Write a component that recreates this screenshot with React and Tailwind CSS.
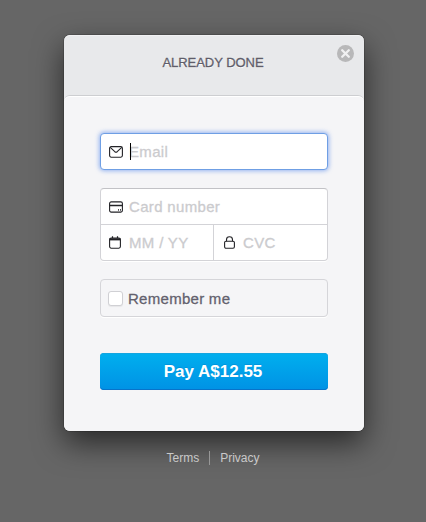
function MailIcon() {
  return (
    <svg width="14" height="12" viewBox="0 0 14 12" fill="none" stroke="#222226">
      <rect x="0.6" y="0.6" width="12.8" height="10.6" rx="1.6" strokeWidth="1.1" />
      <path d="M1.2 1.4 L5.8 5.7 Q7 6.6 8.2 5.7 L12.8 1.4" strokeWidth="1.1" />
    </svg>
  );
}

function CardIcon() {
  return (
    <svg width="14" height="12" viewBox="0 0 14 12" fill="none" stroke="#222226">
      <rect x="0.6" y="0.9" width="12.8" height="10.2" rx="1.6" strokeWidth="1.1" />
      <path d="M0.5 4.5 H13.5" strokeWidth="1.5" />
      <path d="M9.5 8 V9.8 M11.5 8 V9.8" strokeWidth="0.8" />
    </svg>
  );
}

function CalendarIcon() {
  return (
    <svg width="12" height="13" viewBox="0 0 12 13" fill="none" stroke="#222226">
      <rect x="0.6" y="2" width="10.8" height="10.2" rx="1.6" strokeWidth="1.1" />
      <path d="M0.6 3.3 H11.4" strokeWidth="2.2" />
      <path d="M3.5 0.3 V2 M8.5 0.3 V2" strokeWidth="1.2" />
    </svg>
  );
}

function LockIcon() {
  return (
    <svg width="11" height="13" viewBox="0 0 11 13" fill="none" stroke="#222226">
      <rect x="0.6" y="5.2" width="9.8" height="7" rx="1.4" strokeWidth="1.1" />
      <path d="M2.5 5.2 V3.7 Q2.5 0.8 5.5 0.8 Q8.5 0.8 8.5 3.7 V5.2" strokeWidth="1.1" />
    </svg>
  );
}

function Placeholder({ children }) {
  return (
    <span className="text-[15px] leading-5 tracking-[0.33px] text-[#cbcbce] [-webkit-text-stroke:0.3px_#cbcbce]">
      {children}
    </span>
  );
}

export default function App() {
  return (
    <div className="flex h-[522px] w-[426px] flex-col items-center overflow-hidden bg-[#666666] pt-[35px] font-['Liberation_Sans',Arial,sans-serif]">
      <main className="ml-[2px] h-[396px] w-[300px] shrink-0 rounded-[6px] bg-[#e8e9eb] shadow-[0_0_0_1px_rgba(0,0,0,0.15),0_12px_30px_rgba(0,0,0,0.6)]">
        <header className="relative flex h-[60px] justify-center rounded-t-[6px] pt-[18px] pr-[2px] shadow-[inset_0_1px_0_#f1f1f3]">
          <h1 className="text-[13px] leading-5 tracking-[-0.05px] text-[#5f5d6a] [-webkit-text-stroke:0.3px_#5f5d6a] [text-shadow:0_1px_0_#fff]">
            ALREADY DONE
          </h1>
          <button aria-label="Close" className="absolute top-[10px] right-[10px]">
            <svg width="17" height="17" viewBox="0 0 17 17">
              <circle cx="8.5" cy="8.5" r="8.5" fill="#b8b8b9" />
              <path d="M5.2 5.2 L11.8 11.8 M11.8 5.2 L5.2 11.8" stroke="#f1f1f2" strokeWidth="2.3" strokeLinecap="round" />
            </svg>
          </button>
        </header>
        <section className="h-[336px] rounded-[6px] border-t border-[#cdced1] bg-[#f5f5f7] px-[36px] pt-[37px] shadow-[inset_0_1px_0_#ffffff]">
          <div className="flex h-[37px] items-center rounded-[4px] border border-[#6f9fe4] bg-white pl-[8px] shadow-[0_0_4px_1px_rgba(70,125,235,0.55)]">
            <MailIcon />
            <span className="relative z-10 ml-[7px] h-[17px] w-px bg-black" />
            <span className="-ml-[2px] flex"><Placeholder>Email</Placeholder></span>
          </div>

          <div className="mt-[18px] h-[73px] rounded-[4px] border border-[#d3d3d7] border-t-[#c2c2c6] bg-white shadow-[0_1px_0_#fff]">
            <div className="flex h-[36px] items-center gap-[6px] border-b border-[#d3d3d7] pl-[8px]">
              <CardIcon />
              <Placeholder>Card number</Placeholder>
            </div>
            <div className="flex h-[35px]">
              <div className="flex w-[113px] items-center gap-[8px] border-r border-[#d3d3d7] pl-[8px]">
                <CalendarIcon />
                <Placeholder>MM / YY</Placeholder>
              </div>
              <div className="flex items-center gap-[8px] pl-[10px]">
                <LockIcon />
                <Placeholder>CVC</Placeholder>
              </div>
            </div>
          </div>

          <label className="mt-[18px] flex h-[38px] items-center rounded-[4px] border border-[#d5d5d9] pl-[7px] shadow-[0_1px_0_#fff]">
            <span className="size-[15px] rounded-[3px] border border-[#d0d0d4] bg-white shadow-[0_1px_1px_rgba(0,0,0,0.06)]" />
            <span className="ml-[5px] pt-[2px] text-[15px] leading-5 tracking-[0.28px] text-[#62606d] [-webkit-text-stroke:0.3px_#62606d] [text-shadow:0_1px_0_#fff]">
              Remember me
            </span>
          </label>

          <button className="mt-[36px] flex h-[37px] w-full items-center justify-center rounded-[4px] bg-linear-to-b from-[#00afee] to-[#0092e5] pr-[2px] text-[17px] leading-5 font-bold text-white shadow-[inset_0_-1px_0_#0873ca,inset_0_1px_0_#14a5e0] [text-shadow:0_-1px_0_rgba(0,80,160,0.2)]">
            Pay A$12.55
          </button>
        </section>
      </main>

      <footer className="mt-[19px] flex items-center text-[12px] leading-4 text-[#c9c9c9]">
        <a>Terms</a>
        <span className="mx-[10px] h-[14px] w-px bg-[#979797]" />
        <a>Privacy</a>
      </footer>
    </div>
  );
}
